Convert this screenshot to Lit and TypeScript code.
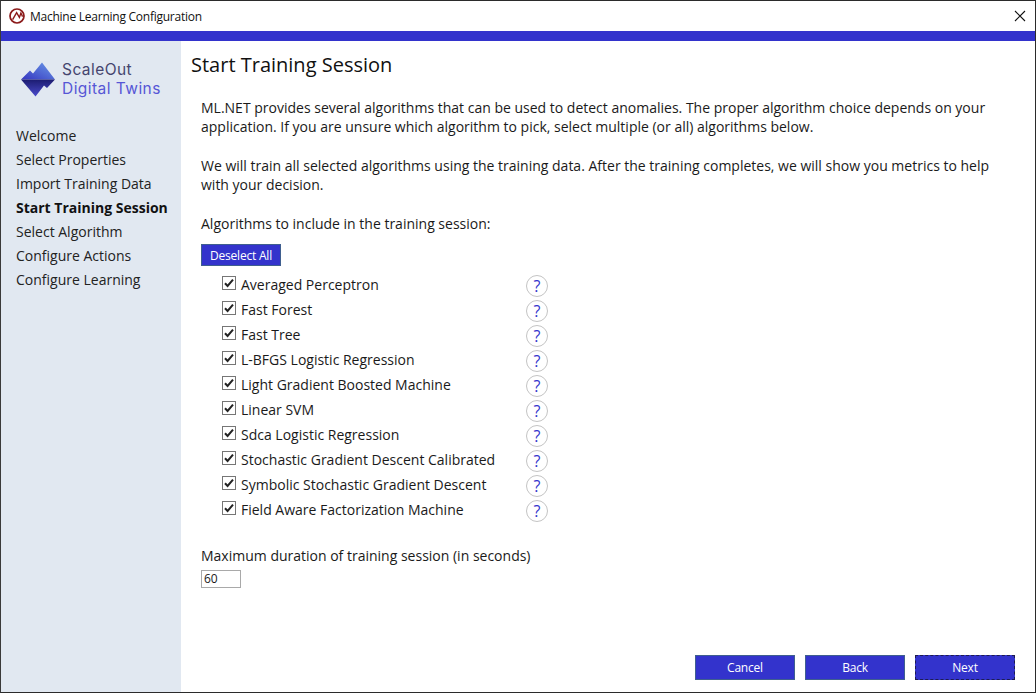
import { LitElement, html, css, svg } from "lit";
import { customElement } from "lit/decorators.js";

const NAV = ["Welcome", "Select Properties", "Import Training Data", "Start Training Session", "Select Algorithm", "Configure Actions", "Configure Learning"];
const ALGOS = ["Averaged Perceptron", "Fast Forest", "Fast Tree", "L-BFGS Logistic Regression", "Light Gradient Boosted Machine", "Linear SVM", "Sdca Logistic Regression", "Stochastic Gradient Descent Calibrated", "Symbolic Stochastic Gradient Descent", "Field Aware Factorization Machine"];

@customElement("app-root")
export class AppRoot extends LitElement {
  static styles = css`
    :host { display: block; width: 1036px; height: 693px; font-family: "Open Sans", "Noto Sans", sans-serif; color: #1a1a1a; }
    * { box-sizing: border-box; }
    .win { width: 1036px; height: 693px; border: 1px solid #2b2b2b; border-left-color: #3a3a3a; display: flex; flex-direction: column; background: #fff; overflow: hidden; }
    .title { height: 30px; flex: none; display: flex; align-items: center; padding-left: 8px; font-size: 12px; letter-spacing: -0.25px; color: #111; }
    .title svg.logo { margin-right: 5px; margin-top: -1px; }
    .close { margin-left: auto; margin-right: 9px; display: block; }
    .band { height: 10px; flex: none; background: #3333cc; }
    .body { flex: 1; display: flex; min-height: 0; }
    .side { width: 180px; flex: none; background: #e1e8f1; padding-top: 19px; }
    .brand { display: flex; align-items: center; padding-left: 20px; height: 38px; gap: 6px; }
    .brand-text { font-family: "Inter", "Open Sans", sans-serif; font-size: 15.5px; line-height: 19px; letter-spacing: 0.45px; }
    .b1 { color: #45456e; }
    .b2 { color: #5656d6; }
    .nav { margin-top: 26px; padding-left: 15px; display: flex; flex-direction: column; }
    .nav div { height: 24px; line-height: 24px; font-size: 14px; white-space: nowrap; color: #222; }
    .nav .on { font-weight: 700; color: #111; }
    .main { flex: 1; position: relative; display: flex; flex-direction: column; padding: 8px 20px 0 10px; min-width: 0; }
    h1 { margin: 0; font-weight: 400; font-size: 20px; line-height: 32px; color: #111; }
    .content { padding-left: 10px; }
    p { margin: 0; font-size: 14px; line-height: 19px; white-space: nowrap; }
    .p1 { margin-top: 17px; }
    .p2 { margin-top: 20px; }
    .p3 { margin-top: 20px; }
    .btn { display: flex; align-items: center; justify-content: center; background: #3333cc; border: 1px solid #3f5f8f; color: #fff; font-size: 12px; letter-spacing: -0.2px; font-family: inherit; padding: 0; }
    .desel { width: 80px; height: 22px; margin-top: 11px; }
    .list { margin-top: 6px; padding-left: 21px; }
    .row { display: flex; align-items: center; height: 25px; font-size: 14px; white-space: nowrap; }
    .cb { width: 14px; height: 14px; flex: none; display: block; margin-top: -3px; }
    .lab { margin-left: 5px; width: 285px; }
    .help { width: 22px; height: 22px; flex: none; border: 1px solid #c4c4c4; border-radius: 50%; display: flex; align-items: center; justify-content: center; color: #3333cc; font-size: 16px; font-weight: 500; margin-top: 2px; }
    .dur { margin-top: 24px; }
    .num { width: 40px; height: 18px; margin-top: 5px; border: 1px solid #a9a9a9; font-size: 12px; line-height: 16px; padding-left: 2px; letter-spacing: -0.2px; }
    .foot { position: absolute; right: 20px; bottom: 12px; display: flex; gap: 10px; }
    .foot .btn { width: 100px; height: 25px; }
    .foot .next { border: 1px dashed #1d1d50; outline: none; }
  `;

  private check() {
    return svg`<svg class="cb" viewBox="0 0 14 14"><rect x="0.5" y="0.5" width="13" height="13" fill="#fff" stroke="#767676"/><path d="M3 7.2 L5.6 10 L11 3.6" fill="none" stroke="#222" stroke-width="2"/></svg>`;
  }

  render() {
    return html`<div class="win">
      <div class="title">
        <svg class="logo" width="16" height="16" viewBox="0 0 16 16"><circle cx="8" cy="8" r="7" fill="#fff" stroke="#8b1a1a" stroke-width="1.7"/><path d="M3.6 11.6 L7.6 4.6 L10.4 9.4 L11.9 5 L13.6 8.6" fill="none" stroke="#8b1a1a" stroke-width="1.4"/></svg>
        Machine Learning Configuration
        <svg class="close" width="12" height="12" viewBox="0 0 12 12"><path d="M1 1 L11 11 M11 1 L1 11" stroke="#111" stroke-width="1.1"/></svg>
      </div>
      <div class="band"></div>
      <div class="body">
        <div class="side">
          <div class="brand">
            <svg width="35" height="35" viewBox="0 0 35 35">
              <defs>
                <linearGradient id="gt" x1="0" y1="1" x2="1" y2="0"><stop offset="0" stop-color="#3535c0"/><stop offset="1" stop-color="#6a9ae8"/></linearGradient>
                <linearGradient id="gb" x1="0" y1="0" x2="0" y2="1"><stop offset="0" stop-color="#1c1c70"/><stop offset="1" stop-color="#4a4acc"/></linearGradient>
              </defs>
              <path d="M0 17.5 L9 8.5 L12 11.5 L21 0.5 L34 17.5 Z" fill="url(#gt)"/>
              <path d="M0 17.5 L34 17.5 L26 26 L23 23.5 L14.5 34.5 Z" fill="url(#gb)"/>
            </svg>
            <div class="brand-text"><div class="b1">ScaleOut</div><div class="b2">Digital Twins</div></div>
          </div>
          <div class="nav">
            ${NAV.map((n) => html`<div class=${n === "Start Training Session" ? "on" : ""}>${n}</div>`)}
          </div>
        </div>
        <div class="main">
          <h1>Start Training Session</h1>
          <div class="content">
            <p class="p1">ML.NET provides several algorithms that can be used to detect anomalies. The proper algorithm choice depends on your<br>application. If you are unsure which algorithm to pick, select multiple (or all) algorithms below.</p>
            <p class="p2">We will train all selected algorithms using the training data. After the training completes, we will show you metrics to help<br>with your decision.</p>
            <p class="p3">Algorithms to include in the training session:</p>
            <button class="btn desel">Deselect All</button>
            <div class="list">
              ${ALGOS.map((a) => html`<div class="row">${this.check()}<span class="lab">${a}</span><span class="help">?</span></div>`)}
            </div>
            <p class="dur">Maximum duration of training session (in seconds)</p>
            <div class="num">60</div>
          </div>
          <div class="foot">
            <button class="btn">Cancel</button>
            <button class="btn">Back</button>
            <button class="btn next">Next</button>
          </div>
        </div>
      </div>
    </div>`;
  }
}
